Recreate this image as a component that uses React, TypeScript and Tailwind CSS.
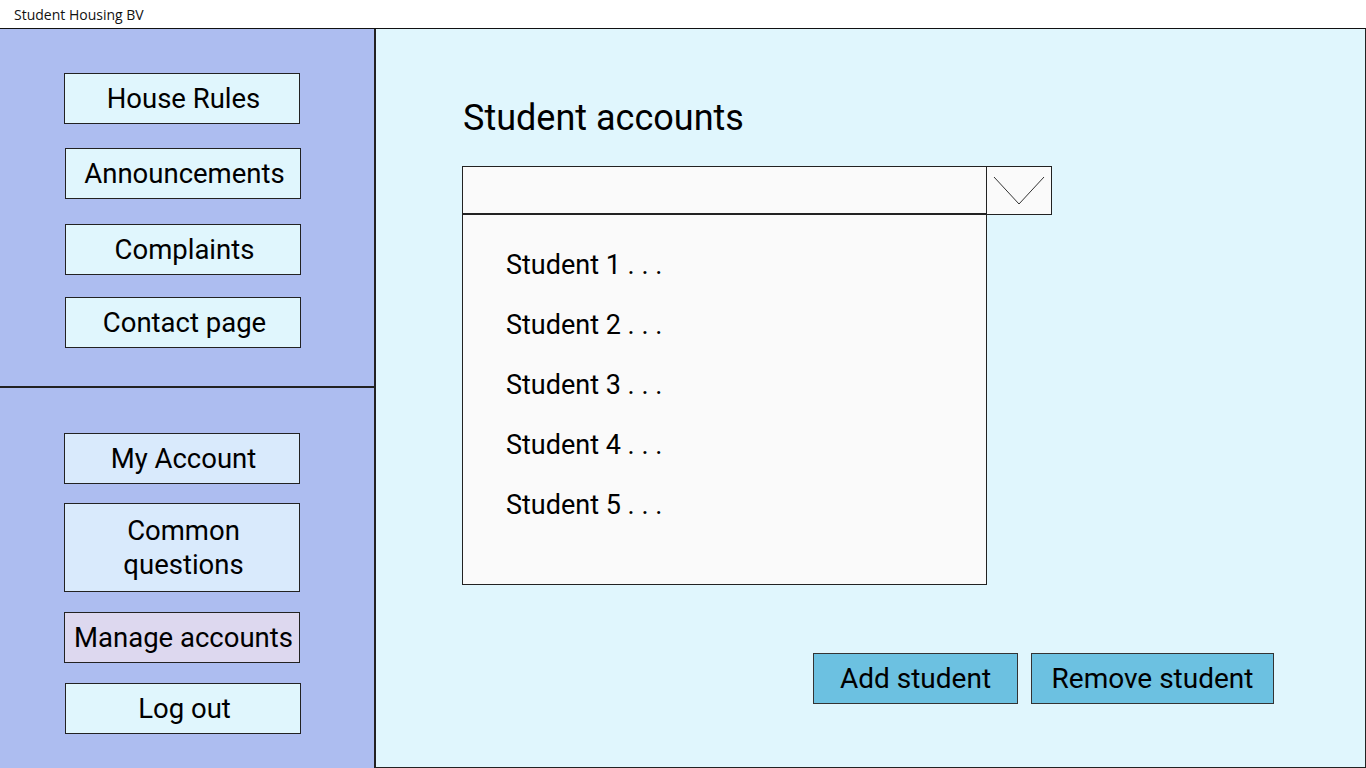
import React from "react";

const topNav = [
  { label: "House Rules", x: "ml-[64px]", mt: "mt-[44px]" },
  { label: "Announcements", x: "ml-[65px]", mt: "mt-[24px]" },
  { label: "Complaints", x: "ml-[65px]", mt: "mt-[25px]" },
  { label: "Contact page", x: "ml-[65px]", mt: "mt-[22px]" },
];

const students = ["Student 1 . . .", "Student 2 . . .", "Student 3 . . .", "Student 4 . . .", "Student 5 . . ."];

function NavButton({ label, className }: { label: React.ReactNode; className: string }) {
  return (
    <div
      className={`w-[236px] border border-[#222] flex items-center justify-center text-center text-[27.5px] leading-[34px] text-black pl-[3px] ${className}`}
    >
      {label}
    </div>
  );
}

export default function App() {
  return (
    <div className="w-[1366px] h-[768px] flex flex-col bg-white overflow-hidden" style={{ fontFamily: "Roboto, 'Liberation Sans', sans-serif" }}>
      {/* Window title */}
      <div className="h-[29px] flex-shrink-0 px-[14px] flex items-center text-[14px] text-[#111] border-b border-[#111]" style={{ fontFamily: "'Open Sans', 'Noto Sans', sans-serif" }}>
        Student Housing BV
      </div>

      <div className="flex-1 flex min-h-0">
        {/* Sidebar */}
        <aside className="w-[376px] flex-shrink-0 bg-[#adbdf0] border-r-2 border-[#222] flex flex-col">
          <div className="h-[359px] border-b-2 border-[#222] flex flex-col">
            {topNav.map((n) => (
              <NavButton key={n.label} label={n.label} className={`h-[51px] bg-[#e0f6fd] ${n.x} ${n.mt}`} />
            ))}
          </div>
          <div className="flex flex-col">
            <NavButton label="My Account" className="h-[51px] ml-[64px] mt-[45px] bg-[#d9eafc]" />
            <NavButton label={<>Common<br />questions</>} className="h-[89px] ml-[64px] mt-[19px] bg-[#d9eafc]" />
            <NavButton label="Manage accounts" className="h-[51px] ml-[64px] mt-[20px] bg-[#ddd8ef]" />
            <NavButton label="Log out" className="h-[51px] ml-[65px] mt-[20px] bg-[#e0f6fd]" />
          </div>
        </aside>

        {/* Main */}
        <main className="flex-1 bg-[#e0f6fd] border-r border-b border-[#222] flex flex-col pl-[86px]">
          <h1 className="mt-[69px] ml-[1px] text-[36px] leading-[40px] text-black font-normal">Student accounts</h1>

          <div className="mt-[28px] flex">
            <div className="w-[525px] h-[49px] bg-[#fafafa] border border-[#222] border-b-2" />
            <div className="w-[65px] h-[49px] bg-[#fafafa] border border-l-0 border-[#222]">
              <svg width="64" height="48" viewBox="0 0 64 48">
                <path d="M7 10 L32 37 L57 10" fill="none" stroke="#333" strokeWidth="1" />
              </svg>
            </div>
          </div>

          <div className="w-[525px] h-[370px] bg-[#fafafa] border border-t-0 border-[#222] flex flex-col pl-[43px] pt-[35px] gap-[30px]">
            {students.map((s) => (
              <div key={s} className="text-[27px] leading-[30px] text-black">{s}</div>
            ))}
          </div>

          <div className="mt-[68px] ml-[351px] flex gap-[13px]">
            <div className="w-[205px] h-[51px] bg-[#6cc1e1] border border-[#333] flex items-center justify-center text-[28px] text-black">Add student</div>
            <div className="w-[243px] h-[51px] bg-[#6cc1e1] border border-[#333] flex items-center justify-center text-[28px] text-black">Remove student</div>
          </div>
        </main>
      </div>
    </div>
  );
}
